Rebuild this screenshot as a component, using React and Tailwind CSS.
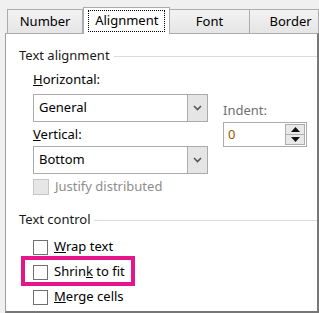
import React from "react";

const font = { fontFamily: '"Noto Sans", "Open Sans", sans-serif' };

function Chevron() {
  return (
    <svg width="9" height="6" viewBox="0 0 9 6">
      <path d="M1 1 L4.5 4.5 L8 1" fill="none" stroke="#555" strokeWidth="1.6" />
    </svg>
  );
}

function Select({ value }) {
  return (
    <div className="flex h-[28px] w-[175px] border border-[#ababab] bg-white">
      <div className="flex flex-1 items-center pl-[5px] text-[13px] text-black">{value}</div>
      <div className="flex w-[20px] items-center justify-center border-l border-[#adadad] bg-[#e5e5e5]">
        <Chevron />
      </div>
    </div>
  );
}

function Check({ children, disabled }) {
  return (
    <div className="flex h-[24px] items-center">
      <div
        className={
          disabled
            ? "h-[16px] w-[16px] border border-[#c6c6c6] bg-[#e6e6e6]"
            : "h-[15px] w-[15px] border border-[#707070] bg-white"
        }
      />
      <span className={"ml-[6px] text-[13px] " + (disabled ? "text-[#8d8d8d]" : "text-black")}>{children}</span>
    </div>
  );
}

function Tab({ children, w }) {
  return (
    <div
      className={
        "flex h-[24px] items-center justify-center border border-b-0 border-[#acacac] bg-gradient-to-b from-[#f3f3f3] to-[#e5e5e5] text-[13px] text-black " +
        w
      }
    >
      {children}
    </div>
  );
}

export default function App() {
  return (
    <div className="relative h-[313px] w-[319px] overflow-hidden bg-[#f0f0f0]" style={font}>
      <div className="flex h-[33px] items-end pl-[7px]">
        <Tab w="w-[77px]">Number</Tab>
        <div className="relative z-10 -mb-px flex h-[27px] w-[88px] items-center justify-center border border-b-0 border-[#acacac] bg-white px-[4px] pt-[2px] pb-[2px]">
          <div className="flex h-full w-full items-center justify-center border border-dotted border-black text-[13px] text-black">
            Alignment
          </div>
        </div>
        <Tab w="w-[80px] border-l-0">Font</Tab>
        <Tab w="w-[70px] border-l-0 justify-start pl-[20px]">Border</Tab>
      </div>

      <div className="ml-[5px] h-[280px] w-[314px] border-t border-l border-r-2 border-b-2 border-t-[#acacac] border-l-[#a0a0a0] border-r-[#777777] border-b-[#777777] bg-white pl-[13px]">
        <div className="mt-[14px] flex h-[16px] items-center text-[13px] text-[#1a1a1a]">
          <span>Text alignment</span>
          <div className="ml-[4px] h-px flex-1 bg-[#dcdcdc]" />
        </div>

        <div className="ml-[14px] flex">
          <div className="flex w-[175px] flex-col">
            <div className="mt-[8px] flex h-[16px] items-center text-[13px] text-black">
              <span>
                <span className="underline">H</span>orizontal:
              </span>
            </div>
            <div className="mt-[6px]">
              <Select value="General" />
            </div>
            <div className="mt-[5px] flex h-[16px] items-center text-[13px] text-black">
              <span>
                <span className="underline">V</span>ertical:
              </span>
            </div>
            <div className="mt-[3px]">
              <Select value="Bottom" />
            </div>
            <div className="mt-[1px]">
              <Check disabled>Justify distributed</Check>
            </div>
          </div>
          <div className="ml-[15px] flex flex-col">
            <div className="mt-[39px] flex h-[16px] items-center text-[13px] text-[#707070]">Indent:</div>
            <div className="mt-[3px] flex h-[25px] w-[84px] border border-[#ababab] bg-white">
              <div className="flex flex-1 items-center pl-[4px] text-[13px] text-[#9a5a00]">0</div>
              <div className="my-[1px] mr-[1px] flex w-[20px] flex-col">
                <div className="flex flex-1 items-center justify-center border border-[#adadad] bg-[#e8e8e8]">
                  <svg width="9" height="5" viewBox="0 0 9 5">
                    <path d="M0 5 L4.5 0 L9 5 Z" fill="#111" />
                  </svg>
                </div>
                <div className="flex flex-1 items-center justify-center border border-t-0 border-[#adadad] bg-[#e8e8e8]">
                  <svg width="9" height="5" viewBox="0 0 9 5">
                    <path d="M0 0 L4.5 5 L9 0 Z" fill="#111" />
                  </svg>
                </div>
              </div>
            </div>
          </div>
        </div>

        <div className="mt-[13px] flex h-[16px] items-center text-[13px] text-[#1a1a1a]">
          <span>Text control</span>
          <div className="ml-[3px] h-px flex-1 bg-[#dcdcdc]" />
        </div>

        <div className="ml-[14px] mt-[7px] flex flex-col gap-[1px]">
          <Check>
            <span className="underline">W</span>rap text
          </Check>
          <Check>
            Shrin<span className="underline">k</span> to fit
          </Check>
          <Check>
            <span className="underline">M</span>erge cells
          </Check>
        </div>
      </div>

      <div className="absolute left-[21px] top-[256px] h-[30px] w-[114px] border-[4px] border-[#e5168c]" />
    </div>
  );
}
